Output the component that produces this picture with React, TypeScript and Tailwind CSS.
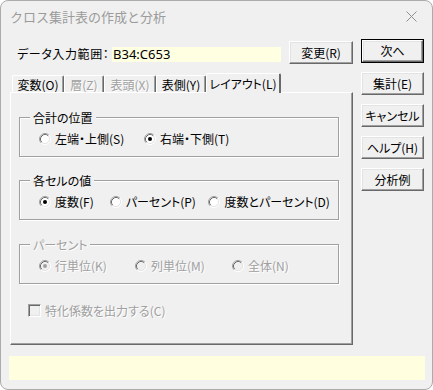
import React from 'react';

const FONT = { fontFamily: '"Noto Sans CJK JP", "Noto Sans", sans-serif' };

function Radio({ checked, disabled }: { checked?: boolean; disabled?: boolean }) {
    return (
        <svg width="12" height="12" viewBox="0 0 12 12" className="shrink-0">
            <circle cx="6" cy="6" r="4.5" fill={disabled ? '#f0f0f0' : '#ffffff'} />
            <path d="M2.11 9.89 A5.5 5.5 0 0 1 9.89 2.11" fill="none" stroke="#a0a0a0" />
            <path d="M9.89 2.11 A5.5 5.5 0 0 1 2.11 9.89" fill="none" stroke="#ffffff" />
            <path d="M2.82 9.18 A4.5 4.5 0 0 1 9.18 2.82" fill="none" stroke="#696969" />
            <path d="M9.18 2.82 A4.5 4.5 0 0 1 2.82 9.18" fill="none" stroke="#e3e3e3" />
            {checked && <circle cx="6" cy="6" r="2" fill={disabled ? '#a0a0a0' : '#000000'} />}
        </svg>
    );
}

function RadioItem({ label, checked, disabled, w }: { label: string; checked?: boolean; disabled?: boolean; w: string }) {
    return (
        <div className={`flex items-center gap-[4px] whitespace-nowrap ${w}`}>
            <Radio checked={checked} disabled={disabled} />
            <span className={disabled ? 'text-[#a0a0a0] [text-shadow:1px_1px_0_#ffffff]' : 'text-black'}>{label}</span>
        </div>
    );
}

function Group({ title, disabled, className, children }: { title: string; disabled?: boolean; className?: string; children: React.ReactNode }) {
    return (
        <div className={`relative h-[40px] w-[320px] border border-[#a0a0a0] shadow-[1px_1px_0_#ffffff,inset_1px_1px_0_#ffffff] pt-[13px] pl-[19px] ${className ?? ''}`}>
            {/* group caption sits on the frame line */}
            <span className={`absolute -top-[8px] left-[10px] bg-[#f0f0f0] px-[3px] leading-[15px] ${disabled ? 'text-[#a0a0a0] [text-shadow:1px_1px_0_#ffffff]' : 'text-black'}`}>
                {title}
            </span>
            <div className="flex items-center h-[15px] leading-[15px]">{children}</div>
        </div>
    );
}

function Button({ label, isDefault, className }: { label: string; isDefault?: boolean; className?: string }) {
    return (
        <div className={`h-[23px] ${isDefault ? 'border border-black' : ''} ${className ?? ''}`}>
            <div className="h-full flex items-center justify-center border-t border-l border-t-white border-l-white border-r border-b border-r-[#696969] border-b-[#696969] shadow-[inset_-1px_-1px_0_#a0a0a0,inset_1px_1px_0_#e3e3e3] bg-[#f0f0f0] text-black text-[12px] leading-none whitespace-nowrap">
                {label}
            </div>
        </div>
    );
}

function Tab({ label, w, disabled, selected }: { label: string; w: string; disabled?: boolean; selected?: boolean }) {
    if (selected) {
        return (
            <div className={`relative z-10 -mb-px h-[20px] ${w} bg-[#f0f0f0] border-t border-l border-t-white border-l-white border-r-2 border-r-[#696969] rounded-t-[2px] flex items-center justify-center text-black whitespace-nowrap`}>
                {label}
            </div>
        );
    }
    return (
        <div className={`h-[17px] ${w} border-t border-l border-t-white border-l-white border-r border-r-[#696969] shadow-[inset_-1px_0_0_#a0a0a0] rounded-t-[2px] flex items-center justify-center whitespace-nowrap ${disabled ? 'text-[#a0a0a0] [text-shadow:1px_1px_0_#ffffff]' : 'text-black'}`}>
            {label}
        </div>
    );
}

export default function App() {
    return (
        <div style={FONT} className="w-[433px] h-[390px] bg-[#f0f0f0] border border-[#ababab] rounded-[8px] flex flex-col overflow-hidden text-[12px] leading-[15px] [font-feature-settings:'palt']">
            {/* title bar */}
            <div className="h-[31px] flex items-center justify-between pl-[9px] pr-[15px] shrink-0">
                <span className="text-[13px] text-[#9b9b9b] [font-feature-settings:normal]">クロス集計表の作成と分析</span>
                <svg width="11" height="11" viewBox="0 0 11 11">
                    <path d="M0.5 0.5 L10.5 10.5 M10.5 0.5 L0.5 10.5" stroke="#8f8f8f" strokeWidth="1" />
                </svg>
            </div>

            <div className="flex pl-[9px] pt-[7px]">
                {/* left column */}
                <div className="w-[343px] flex flex-col">
                    <div className="mt-[2px] h-[23px] flex items-center">
                        <div className="w-[102px] shrink-0 flex items-center pl-[7px] pt-[2px] text-[12px] text-black whitespace-nowrap">
                            <span className="tracking-[0.6px]">データ入力範囲</span>
                            <span className="ml-auto pr-[4px]">：</span>
                        </div>
                        <div className="w-[169px] shrink-0 h-[15px] mt-[4px] bg-[#ffffe1] pl-[1px] text-[13px] leading-[15px] text-black" style={{ fontFamily: '"Noto Sans", sans-serif' }}>
                            B34:C653
                        </div>
                        <Button label="変更(R)" className="ml-[8px] w-[64px] shrink-0" />
                    </div>

                    {/* tab strip */}
                    <div className="mt-[9px] h-[19px] flex items-end pl-[2px]">
                        <Tab label="変数(O)" w="w-[52px]" />
                        <Tab label="層(Z)" w="w-[40px]" disabled />
                        <Tab label="表頭(X)" w="w-[52px]" disabled />
                        <Tab label="表側(Y)" w="w-[50px]" />
                        <Tab label="レイアウト(L)" w="w-[75px]" selected />
                    </div>

                    {/* tab page */}
                    <div className="h-[253px] border-t border-l border-t-white border-l-white border-r border-b border-r-[#696969] border-b-[#696969] shadow-[inset_-1px_-1px_0_#a0a0a0] pl-[8px] pt-[24px]">
                        <Group title="合計の位置">
                            <RadioItem label="左端・上側(S)" w="w-[105px]" />
                            <RadioItem label="右端・下側(T)" w="w-[150px]" checked />
                        </Group>
                        <Group title="各セルの値" className="mt-[23px]">
                            <RadioItem label="度数(F)" w="w-[71px]" checked />
                            <RadioItem label="パーセント(P)" w="w-[99px]" />
                            <RadioItem label="度数とパーセント(D)" w="w-[130px]" />
                        </Group>
                        <Group title="パーセント" className="mt-[24px]" disabled>
                            <RadioItem label="行単位(K)" w="w-[96px]" checked disabled />
                            <RadioItem label="列単位(M)" w="w-[97px]" disabled />
                            <RadioItem label="全体(N)" w="w-[80px]" disabled />
                        </Group>

                        <div className="mt-[19px] ml-[9px] flex items-center gap-[4px] h-[15px]">
                            <div className="w-[13px] h-[13px] border-t border-l border-t-[#a0a0a0] border-l-[#a0a0a0] border-r border-b border-r-white border-b-white shadow-[inset_1px_1px_0_#696969,inset_-1px_-1px_0_#e3e3e3] bg-[#f0f0f0]" />
                            <span className="text-[#a0a0a0] [text-shadow:1px_1px_0_#ffffff]">特化係数を出力する(C)</span>
                        </div>
                    </div>
                </div>

                {/* right column */}
                <div className="ml-[8px] w-[63px] flex flex-col gap-[9px]">
                    <Button label="次へ" isDefault className="h-[24px]" />
                    <Button label="集計(E)" />
                    <Button label="キャンセル" />
                    <Button label="ヘルプ(H)" />
                    <Button label="分析例" />
                </div>
            </div>

            {/* status bar */}
            <div className="mt-[11px] ml-[8px] w-[416px] h-[24px] bg-[#ffffe0]" />
        </div>
    );
}
